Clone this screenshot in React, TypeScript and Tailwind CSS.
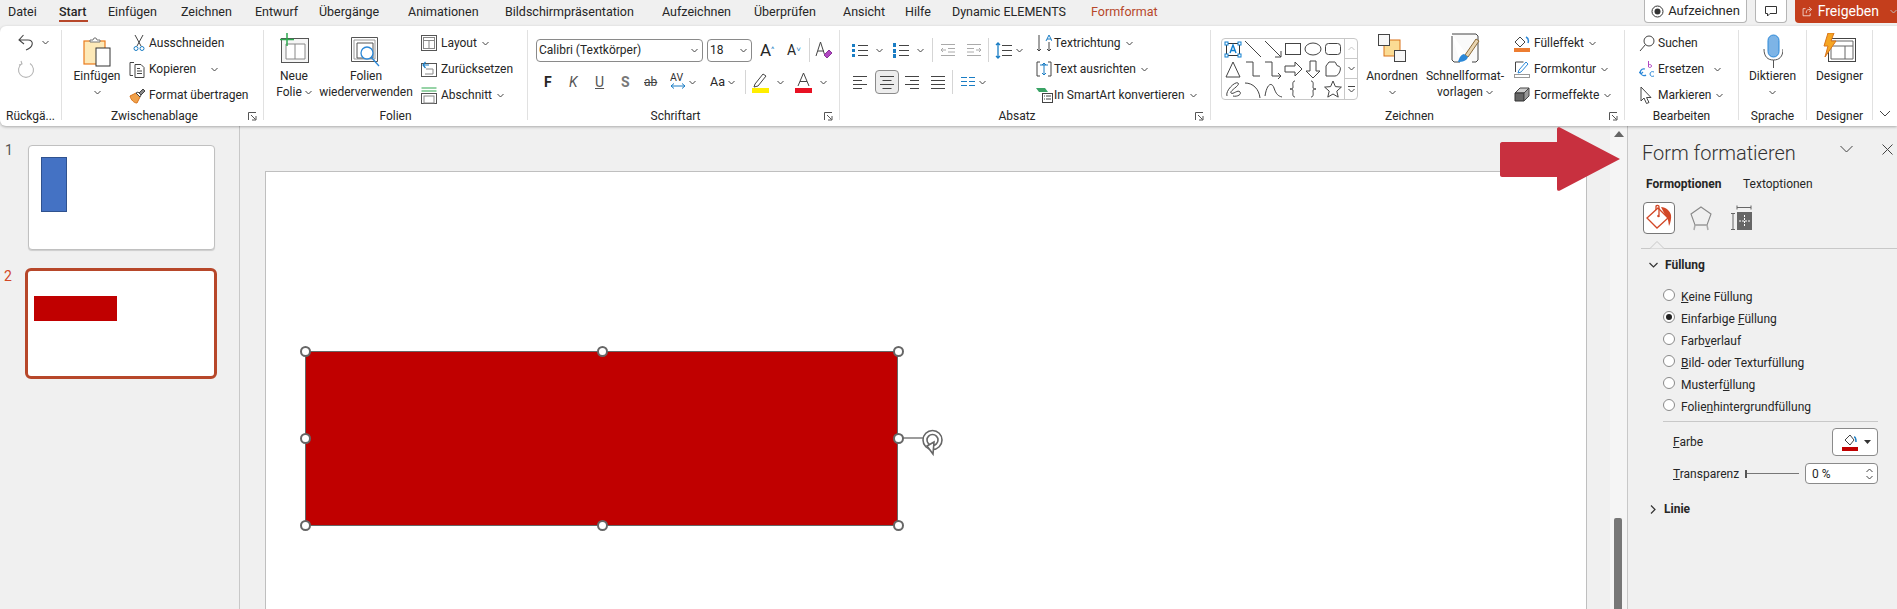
import type { ReactNode } from "react";

const tabs = [
  { label: "Datei", cls: "w-[51px]" },
  { label: "Start", cls: "w-[49px] font-medium" },
  { label: "Einfügen", cls: "w-[73px]" },
  { label: "Zeichnen", cls: "w-[74px]" },
  { label: "Entwurf", cls: "w-[64px]" },
  { label: "Übergänge", cls: "w-[89px]" },
  { label: "Animationen", cls: "w-[97px]" },
  { label: "Bildschirmpräsentation", cls: "w-[157px]" },
  { label: "Aufzeichnen", cls: "w-[92px]" },
  { label: "Überprüfen", cls: "w-[89px]" },
  { label: "Ansicht", cls: "w-[62px]" },
  { label: "Hilfe", cls: "w-[47px]" },
  { label: "Dynamic ELEMENTS", cls: "w-[139px]" },
  { label: "Formformat", cls: "w-[90px] text-[#b7472a]" },
];

function Chev({ className = "" }: { className?: string }) {
  return (
    <svg width="7" height="5" viewBox="0 0 7 5" className={"shrink-0 " + className} fill="none" stroke="#444" strokeWidth="1">
      <path d="M.5 1 3.5 4 6.5 1" />
    </svg>
  );
}

function Launcher() {
  return (
    <svg width="9" height="9" viewBox="0 0 9 9" fill="none" stroke="#555" strokeWidth="1">
      <path d="M.5 8V.5H8M3 3l4.500 4.500M4 8h4V4" />
    </svg>
  );
}

function Group({ cls, label, launcher, children }: { cls: string; label: string; launcher?: boolean; children: ReactNode }) {
  return (
    <div className={"h-[90px] flex flex-col border-r border-[#e1e1e1] shrink-0 " + cls}>
      <div className="h-[80px] flex shrink-0">{children}</div>
      <div className="h-[12px] shrink-0 flex items-center text-[12px] leading-[12px] whitespace-nowrap">
        <div className="flex-1 text-center">{label}</div>
        {launcher && (
          <div className="w-[16px] flex justify-start pl-[1px]">
            <Launcher />
          </div>
        )}
      </div>
    </div>
  );
}

function SmallRow({ icon, text, chev, chevCls = "ml-[5px]", iconCls = "w-[20px]" }: { icon: ReactNode; text: string; chev?: boolean; chevCls?: string; iconCls?: string }) {
  return (
    <div className="h-[26px] flex items-center whitespace-nowrap">
      <div className={"flex items-center justify-start shrink-0 " + iconCls}>{icon}</div>
      <span>{text}</span>
      {chev && <Chev className={chevCls} />}
    </div>
  );
}

function Tall({ cls, icon, lines, chevBelow }: { cls: string; icon: ReactNode; lines: ReactNode[]; chevBelow?: boolean }) {
  return (
    <div className={"flex flex-col items-center shrink-0 " + cls}>
      <div className="h-[38px] flex items-center justify-center">{icon}</div>
      {lines.map((l, i) => (
        <div key={i} className="h-[16px] leading-[16px] whitespace-nowrap flex items-center">
          {l}
        </div>
      ))}
      {chevBelow && (
        <div className="h-[16px] flex items-center">
          <Chev />
        </div>
      )}
    </div>
  );
}

const stroke = { fill: "none", stroke: "#444", strokeWidth: 1 };

const shapes: ReactNode[] = [
  <g key="a">
    <rect x="3.5" y="4.5" width="13" height="12" fill="none" stroke="#333" />
    <rect x="2" y="3" width="3" height="3" fill="#fff" stroke="#0f7fd0" />
    <rect x="15" y="3" width="3" height="3" fill="#fff" stroke="#0f7fd0" />
    <rect x="2" y="15" width="3" height="3" fill="#fff" stroke="#0f7fd0" />
    <rect x="15" y="15" width="3" height="3" fill="#fff" stroke="#0f7fd0" />
    <path d="M7 14l3-8 3 8M8 11.5h4" fill="none" stroke="#0f7fd0" strokeWidth="1.4" />
  </g>,
  <path key="b" d="M2 2l16 16" {...stroke} />,
  <path key="c" d="M2 2l16 16M18 12v6h-6" {...stroke} />,
  <rect key="d" x="2.5" y="4.5" width="15" height="11" {...stroke} />,
  <ellipse key="e" cx="10" cy="10" rx="8" ry="6" {...stroke} />,
  <rect key="f" x="2.5" y="4.5" width="15" height="11" rx="3" {...stroke} />,
  <path key="g" d="M10 3l7 15H3z" {...stroke} />,
  <path key="h" d="M3 3h7v14h7" {...stroke} />,
  <path key="i" d="M2 3h7v14h9M15 14l3 3-3 3" {...stroke} />,
  <path key="j" d="M2 7h10V3l7 7-7 7v-4H2z" {...stroke} />,
  <path key="k" d="M7 2h6v10h4l-7 7-7-7h4z" {...stroke} />,
  <path key="l" d="M3 17V7l3-4h6c1 0 1 4 3 4s3 2 2 5-3 5-5 5z" {...stroke} />,
  <path key="m" d="M4 17C2 12 12 2 15 4S6 12 8 14s7-4 9-1-4 5-7 4" {...stroke} />,
  <path key="n" d="M2 4c8 0 14 6 15 15" {...stroke} />,
  <path key="o" d="M2 17C4 4 9 3 11 9s4 8 8 9" {...stroke} />,
  <path key="p" d="M12 2c-3 0-2 4-2 6s-1 2-3 2c2 0 3 0 3 2s-1 6 2 6" {...stroke} />,
  <path key="q" d="M8 2c3 0 2 4 2 6s1 2 3 2c-2 0-3 0-3 2s1 6-2 6" {...stroke} />,
  <path key="r" d="M10 2l2.4 5.6 6 .5-4.6 4 1.4 6L10 15l-5.2 3.1 1.4-6-4.6-4 6-.5z" {...stroke} />,
];

function ListLines({ x = 6 }: { x?: number }) {
  return (
    <g stroke="#444">
      <path d={`M${x} 3.5h10M${x} 8.5h10M${x} 13.5h10`} />
    </g>
  );
}

function Handle({ cls }: { cls: string }) {
  return <div className={"absolute w-[11px] h-[11px] rounded-full bg-white border-2 border-[#666] " + cls} />;
}

function Radio({ on, children }: { on?: boolean; children: ReactNode }) {
  return (
    <div className="h-[22px] flex items-center pl-[35px]">
      <div className="w-[12px] h-[12px] rounded-full border border-[#8a8a8a] bg-white flex items-center justify-center shrink-0">
        {on && <div className="w-[6px] h-[6px] rounded-full bg-[#222]" />}
      </div>
      <div className="ml-[6px] mt-[3px]">{children}</div>
    </div>
  );
}

export default function App() {
  return (
    <div className="relative h-screen w-full overflow-hidden bg-[#f0f0f0] text-[#262626] text-[12px] font-['Roboto',sans-serif]">
      {/* tab row */}
      <div className="h-[26px] flex items-start justify-between">
        <div className="flex pl-[8px] text-[12.5px]">
          {tabs.map((t) => (
            <div key={t.label} className={"h-[23px] leading-[23px] relative whitespace-nowrap " + t.cls}>
              {t.label}
              {t.label === "Start" && <div className="absolute left-0 top-[20px] w-[29px] h-[2px] bg-[#b7472a]" />}
            </div>
          ))}
        </div>
        <div className="flex gap-[8px] text-[13px]">
          <div className="w-[103px] h-[23px] border border-[#b5b5b5] border-t-0 rounded-b-[4px] bg-white flex items-center justify-center gap-[4px]">
            <svg width="13" height="13" viewBox="0 0 13 13">
              <circle cx="6.5" cy="6.5" r="5.5" fill="none" stroke="#333" />
              <circle cx="6.5" cy="6.5" r="3" fill="#333" />
            </svg>
            Aufzeichnen
          </div>
          <div className="w-[32px] h-[23px] border border-[#b5b5b5] border-t-0 rounded-b-[4px] bg-white flex items-center justify-center">
            <svg width="14" height="13" viewBox="0 0 14 13" fill="none" stroke="#333">
              <path d="M1.5 1.5h11v7H6L3.5 11V8.500H1.500z" />
            </svg>
          </div>
          <div className="w-[102px] h-[23px] rounded-bl-[4px] bg-[#c43e1c] text-white text-[14px] flex items-center pl-[7px] gap-[5px]">
            <svg width="15" height="15" viewBox="0 0 15 15" fill="none" stroke="#fff">
              <path d="M5 3.500H1.500v10h10V10M6 10V8c0-2.500 2.500-3.500 6-3.500M10 1.500l3.500 3-3.500 3" />
            </svg>
            Freigeben
            <Chev className="ml-[6px] invert" />
          </div>
        </div>
      </div>

      {/* ribbon */}
      <div className="relative z-10 h-[100px] bg-white rounded-l-[6px] shadow-[0_1px_3px_rgba(0,0,0,0.3)] pt-[4px] flex">
        <Group cls="w-[62px]" label="Rückgä...">
          <div className="pl-[18px] pt-[4px]">
            <div className="flex items-center h-[17px] gap-[6px]">
              <svg width="18" height="17" viewBox="0 0 18 17" fill="none" stroke="#444" strokeWidth="1.1">
                <path d="M1 6h9c6 0 6 7-2 10M5.500 1 1 6l5 4" />
              </svg>
              <Chev />
            </div>
            <svg className="mt-[9px] ml-[-1px]" width="18" height="18" viewBox="0 0 18 18" fill="none" stroke="#b5b5b5" strokeWidth="1.1">
              <path d="M5 3.500A7.500 7.500 0 1 0 13 3.500M4 1l1 3-3 1" />
            </svg>
          </div>
        </Group>

        <Group cls="w-[202px]" label="Zwischenablage" launcher>
          <Tall
            cls="w-[50px] ml-[10px]"
            icon={
              <svg width="28" height="30" viewBox="0 0 28 30" className="mt-[6px]">
                <rect x="1" y="4" width="21" height="23" fill="#fde9b8" stroke="#e97b1c" strokeWidth="1.200" />
                <path d="M7 5V3h3l1-2h2l1 2h3v2z" fill="#fff" stroke="#777" />
                <rect x="13" y="11" width="14" height="18" fill="#fff" stroke="#333" />
              </svg>
            }
            lines={["Einfügen"]}
            chevBelow
          />
          <div className="ml-[7px] pt-0">
            <SmallRow
              icon={
                <svg width="12" height="17" viewBox="0 0 12 17" fill="none" stroke="#444" className="ml-[4px]">
                  <path d="M2 0l6 11M10 0 4 11" />
                  <circle cx="3" cy="13.500" r="2" stroke="#1a7dc4" />
                  <circle cx="9" cy="13.500" r="2" stroke="#1a7dc4" />
                </svg>
              }
              text="Ausschneiden"
            />
            <div className="flex items-center">
              <SmallRow
                icon={
                  <svg width="17" height="17" viewBox="0 0 17 17" fill="none" stroke="#444">
                    <path d="M5 1.500H1v13h3M6 3.500h6l3 3v10H6zM8 10h5M8 12.500h5M8 7.500h3" />
                  </svg>
                }
                text="Kopieren"
              />
              <Chev className="ml-[15px]" />
            </div>
            <SmallRow
              icon={
                <svg width="17" height="17" viewBox="0 0 17 17">
                  <path d="M1 9l6-3 4 4-3 6C5 16 2 13 1 9z" fill="#f0a14b" stroke="#d9731a" />
                  <path d="M7 6l2-1 3 3-1 2z" fill="#fff" stroke="#444" />
                  <path d="M10 6l4-4 2 2-4 4z" fill="#888" stroke="#444" />
                </svg>
              }
              text="Format übertragen"
            />
          </div>
        </Group>

        <Group cls="w-[264px]" label="Folien">
          <Tall
            cls="w-[60px]"
            icon={
              <svg width="30" height="30" viewBox="0 0 30 30" className="mt-[-2px]">
                <rect x="2.500" y="5.500" width="27" height="24" fill="#f6f6f6" stroke="#555" />
                <path d="M7 11h19v15H7zM16 11v15" fill="#fff" stroke="#888" />
                <path d="M8 0v13M1 6.500h14" stroke="#2ea84f" strokeWidth="1.500" />
              </svg>
            }
            lines={[
              "Neue",
              <span key="f" className="flex items-center gap-[3px]">
                Folie <Chev />
              </span>,
            ]}
          />
          <Tall
            cls="w-[100px] ml-[-8px]"
            icon={
              <svg width="32" height="32" viewBox="0 0 32 32" className="mt-[6px]">
                <path d="M1.500 1.500h26v24h-26z" fill="#fff" stroke="#555" />
                <path d="M4 4h21v19H4z" fill="#fff" stroke="#999" />
                <path d="M7 7h16v15H7z" fill="#fff" stroke="#555" />
                <circle cx="17" cy="17" r="6" fill="#fff" stroke="#2b88d8" strokeWidth="1.300" />
                <path d="M21 21l8 9" stroke="#2b88d8" strokeWidth="1.300" />
              </svg>
            }
            lines={["Folien", "wiederverwenden"]}
          />
          <div className="ml-[5px]">
            <SmallRow
              icon={
                <svg width="16" height="16" viewBox="0 0 16 16" fill="none" stroke="#555">
                  <rect x=".5" y=".5" width="15" height="15" />
                  <rect x="2.500" y="2.500" width="11" height="11" stroke="#888" />
                  <path d="M2.500 5.500h11M8 5.500v8" stroke="#888" />
                </svg>
              }
              text="Layout"
              chev
            />
            <SmallRow
              icon={
                <svg width="16" height="16" viewBox="0 0 16 16" fill="none" stroke="#555">
                  <rect x=".5" y="2.500" width="15" height="13" />
                  <path d="M5 8h7v5H4" stroke="#888" />
                  <path d="M2 4h6M4.500 1 2 4l2.500 3" stroke="#1a7dc4" strokeWidth="1.200" />
                </svg>
              }
              text="Zurücksetzen"
            />
            <SmallRow
              icon={
                <svg width="16" height="17" viewBox="0 0 16 17" fill="none" stroke="#555">
                  <path d="M.5 1h15M.5 4h15" stroke="#2ea84f" strokeWidth="1.200" />
                  <rect x=".5" y="6.500" width="15" height="10" />
                  <rect x="3" y="9" width="10" height="7" stroke="#888" />
                </svg>
              }
              text="Abschnitt"
              chev
            />
          </div>
        </Group>

        <Group cls="w-[312px]" label="Schriftart" launcher>
          <div className="pl-[8px] pt-[8px]">
            <div className="flex items-center h-[24px]">
              <div className="w-[167px] h-[23px] border border-[#8a8a8a] rounded-[4px] flex items-center justify-between pl-[2px] pr-[4px]">
                Calibri (Textkörper) <Chev />
              </div>
              <div className="ml-[4px] w-[45px] h-[23px] border border-[#8a8a8a] rounded-[4px] flex items-center justify-between pl-[2px] pr-[4px]">
                18 <Chev />
              </div>
              <span className="ml-[8px] w-[27px] text-[17px] leading-[20px]">
                A<span className="align-top text-[8px] text-[#1a7dc4]">^</span>
              </span>
              <span className="w-[20px] text-[14px] leading-[20px]">
                A<span className="align-top text-[8px] text-[#1a7dc4]">˅</span>
              </span>
              <div className="ml-[2px] w-px h-[24px] bg-[#d5d5d5]" />
              <svg className="ml-[5px]" width="18" height="20" viewBox="0 0 18 20" fill="none" stroke="#444">
                <path d="M1 16 5.500 2 10 16M3 11h6" />
                <path d="M9 15l5-5 3 3-5 5z" fill="#b146c2" stroke="#8a3599" />
              </svg>
            </div>
            <div className="flex items-center h-[24px] mt-[8px]">
              <span className="ml-[8px] w-[25px] font-bold text-[14px]">F</span>
              <span className="w-[26px] italic text-[14px] text-[#555]">K</span>
              <span className="w-[26px] underline text-[14px] text-[#555]">U</span>
              <span className="w-[23px] font-bold text-[14px] text-[#777]">S</span>
              <span className="w-[26px] line-through text-[12px] text-[#444]">ab</span>
              <svg width="16" height="20" viewBox="0 0 16 20" fill="none">
                <path d="M1 14h14M1 14l3-2.500M1 14l3 2.500M15 14l-3-2.500M15 14l-3 2.500" stroke="#1a7dc4" />
                <text x="0" y="9" fontSize="10.500" fill="#333" stroke="none">
                  AV
                </text>
              </svg>
              <Chev className="ml-[3px]" />
              <span className="ml-[14px] text-[12.500px]">Aa</span>
              <Chev className="ml-[3px]" />
              <div className="ml-[10px] w-px h-[24px] bg-[#d5d5d5]" />
              <svg className="ml-[6px]" width="17" height="22" viewBox="0 0 17 22">
                <path d="M3 13l8-10 3 2-8 10-4 1z" fill="#fff" stroke="#444" />
                <rect x="0" y="17" width="17" height="5" fill="#ffee00" />
              </svg>
              <Chev className="ml-[8px]" />
              <svg className="ml-[11px]" width="17" height="22" viewBox="0 0 17 22" fill="none" stroke="#444">
                <path d="M3 15 8.500 2 14 15M5 10.500h7" />
                <rect x="0" y="17" width="17" height="5" fill="#e81123" stroke="none" />
              </svg>
              <Chev className="ml-[8px]" />
            </div>
          </div>
        </Group>

        <Group cls="w-[371px]" label="Absatz" launcher>
          <div className="pl-[12px] pt-[8px] w-[190px]">
            <div className="flex items-center h-[24px]">
              <svg width="17" height="17" viewBox="0 0 17 17">
                <ListLines />
                <rect x="0" y="2" width="3" height="3" fill="#1a7dc4" />
                <rect x="0" y="7" width="3" height="3" fill="#1a7dc4" />
                <rect x="0" y="12" width="3" height="3" fill="#1a7dc4" />
              </svg>
              <Chev className="ml-[7px]" />
              <svg className="ml-[10px]" width="17" height="17" viewBox="0 0 17 17">
                <ListLines />
                <rect x="0" y="1" width="3" height="4" fill="#1a7dc4" />
                <rect x="0" y="7" width="3" height="4" fill="#1a7dc4" />
                <rect x="0" y="12" width="3" height="4" fill="#1a7dc4" />
              </svg>
              <Chev className="ml-[7px]" />
              <div className="ml-[8px] w-px h-[24px] bg-[#d5d5d5]" />
              <svg className="ml-[7px]" width="16" height="16" viewBox="0 0 16 16" fill="none" stroke="#aaa">
                <path d="M1 2.500h14M8 6.500h7M8 10h7M1 13.500h14M6 8H1M3 6 1 8l2 2" />
              </svg>
              <svg className="ml-[10px]" width="16" height="16" viewBox="0 0 16 16" fill="none" stroke="#aaa">
                <path d="M1 2.500h14M1 6.500h7M1 10h7M1 13.500h14M10 8h5M13 6l2 2-2 2" />
              </svg>
              <div className="ml-[6px] w-px h-[24px] bg-[#d5d5d5]" />
              <svg className="ml-[6px]" width="17" height="17" viewBox="0 0 17 17" fill="none">
                <path d="M7 3.500h10M7 8.500h10M7 13.500h10" stroke="#444" />
                <path d="M3 1v15M1 3l2-2 2 2M1 14l2 2 2-2" stroke="#1a7dc4" strokeWidth="1.300" />
              </svg>
              <Chev className="ml-[4px]" />
            </div>
            <div className="flex items-center h-[24px] mt-[8px]">
              <svg width="16" height="16" viewBox="0 0 16 16" stroke="#444">
                <path d="M1 2.500h14M1 6.500h9M1 10.500h14M1 14.500h9" />
              </svg>
              <div className="ml-[7px] w-[24px] h-[24px] rounded-[4px] border border-[#8a8a8a] bg-[#ededed] flex items-center justify-center">
                <svg width="16" height="16" viewBox="0 0 16 16" stroke="#444">
                  <path d="M1 2.500h14M3.500 6.500h9M1 10.500h14M3.500 14.500h9" />
                </svg>
              </div>
              <svg className="ml-[5px]" width="16" height="16" viewBox="0 0 16 16" stroke="#444">
                <path d="M1 2.500h14M6 6.500h9M1 10.500h14M6 14.500h9" />
              </svg>
              <svg className="ml-[10px]" width="16" height="16" viewBox="0 0 16 16" stroke="#444">
                <path d="M1 2.500h14M1 6.500h14M1 10.500h14M1 14.500h14" />
              </svg>
              <div className="ml-[6px] w-px h-[24px] bg-[#d5d5d5]" />
              <svg className="ml-[8px]" width="14" height="12" viewBox="0 0 14 12" stroke="#1a7dc4">
                <path d="M0 1.500h6M8 1.500h6M0 5.500h6M8 5.500h6M0 9.500h6M8 9.500h6" />
              </svg>
              <Chev className="ml-[4px]" />
            </div>
          </div>
          <div className="ml-[6px]">
            <SmallRow
              iconCls="w-[18px]"
              icon={
                <svg width="16" height="18" viewBox="0 0 16 18" fill="none" stroke="#444">
                  <path d="M3 1v16M1 15l2 2 2-2M13 8v9M11 15l2 2 2-2" />
                  <path d="M10 7l3-6 3 6M11 5h4" stroke="#1a7dc4" />
                </svg>
              }
              text="Textrichtung"
              chev
            />
            <SmallRow
              iconCls="w-[18px]"
              icon={
                <svg width="16" height="16" viewBox="0 0 16 16" fill="none" stroke="#444">
                  <path d="M4 1H1v14h3M12 1h3v14h-3" />
                  <path d="M8 2v12M6 4l2-2 2 2M6 12l2 2 2-2M4 4h8" stroke="#1a7dc4" />
                </svg>
              }
              text="Text ausrichten"
              chev
            />
            <SmallRow
              iconCls="w-[18px]"
              icon={
                <svg width="17" height="16" viewBox="0 0 17 16">
                  <path d="M0 1h9l3 4H3z" fill="#3aa365" />
                  <rect x="6.500" y="6.500" width="10" height="9" fill="#fff" stroke="#444" />
                  <path d="M8 9h1M10 9h5M8 12h1M10 12h5" stroke="#444" />
                </svg>
              }
              text="In SmartArt konvertieren"
              chev
            />
          </div>
        </Group>

        <Group cls="w-[414px]" label="Zeichnen" launcher>
          <div className="ml-[10px] mt-[8px] w-[137px] h-[62px] border border-[#c8c8c8] rounded-[4px] flex shrink-0">
            <div className="w-[122px] pl-[1px] grid grid-cols-[repeat(6,20px)] auto-rows-[20px]">
              {shapes.map((s, i) => (
                <svg key={i} width="20" height="20" viewBox="0 0 20 20">
                  {s}
                </svg>
              ))}
            </div>
            <div className="w-[13px] border-l border-[#c8c8c8] flex flex-col">
              <div className="h-[20px] flex items-center justify-center border-b border-[#c8c8c8]">
                <Chev className="rotate-180 opacity-30" />
              </div>
              <div className="h-[20px] flex items-center justify-center border-b border-[#c8c8c8]">
                <Chev />
              </div>
              <div className="flex-1 flex flex-col gap-[1px] items-center justify-center">
                <div className="w-[7px] h-px bg-[#444]" />
                <Chev />
              </div>
            </div>
          </div>
          <Tall
            cls="w-[64px] ml-[2px]"
            icon={
              <svg width="28" height="28" viewBox="0 0 28 28" className="mt-[-2px]">
                <rect x="6" y="6" width="16" height="16" fill="#fbdc94" stroke="#d9731a" />
                <rect x=".5" y=".5" width="11" height="11" fill="#f7f7f7" stroke="#444" />
                <rect x="16.500" y="16.500" width="11" height="11" fill="#f7f7f7" stroke="#444" />
              </svg>
            }
            lines={["Anordnen"]}
            chevBelow
          />
          <Tall
            cls="w-[84px] ml-[-1px]"
            icon={
              <svg width="30" height="30" viewBox="0 0 30 30" className="mt-[-2px]">
                <path d="M2 1h24l2 2v24l-2 2h-4M10 29H4l-2-2V3" fill="#fafafa" stroke="#444" />
                <path d="M15 22l11-16 3 2-11 16z" fill="#e8d4b0" stroke="#8a6a3a" />
                <path d="M14 21c-4 1-5 5-6 8 4 0 9-1 10-5z" fill="#2b88d8" />
              </svg>
            }
            lines={[
              "Schnellformat-",
              <span key="v" className="flex items-center gap-[3px]">
                vorlagen <Chev />
              </span>,
            ]}
          />
          <div className="ml-[7px]">
            <SmallRow
              icon={
                <svg width="16" height="17" viewBox="0 0 16 17" fill="none" stroke="#444">
                  <path d="M1 7l5-5 5 5-5 5z" />
                  <path d="M12 2c2 1 3 3 2 6" stroke="#2b88d8" strokeWidth="1.500" />
                  <rect x="0" y="13" width="16" height="4" fill="#ed7d31" stroke="none" />
                </svg>
              }
              text="Fülleffekt"
              chev
            />
            <SmallRow
              icon={
                <svg width="16" height="17" viewBox="0 0 16 17" fill="none" stroke="#444">
                  <path d="M1.500 11V1h8" />
                  <path d="M5 9l7-8 2 2-7 8-3 1z" fill="#fff" stroke="#2b88d8" />
                  <rect x=".5" y="13.500" width="15" height="3" stroke="#999" />
                </svg>
              }
              text="Formkontur"
              chev
            />
            <SmallRow
              icon={
                <svg width="16" height="16" viewBox="0 0 16 16">
                  <path d="M1 6l5-5h9L10 6z" fill="#ccc" stroke="#444" />
                  <path d="M1 6h9v8H1z" fill="#666" stroke="#333" />
                  <path d="M10 6l5-5v8l-5 5z" fill="#999" stroke="#444" />
                </svg>
              }
              text="Formeffekte"
              chev
            />
          </div>
        </Group>

        <Group cls="w-[114px]" label="Bearbeiten">
          <div className="ml-[14px]">
            <SmallRow
              iconCls="w-[19px]"
              icon={
                <svg width="16" height="17" viewBox="0 0 16 17" fill="none" stroke="#444">
                  <circle cx="10" cy="6" r="5" />
                  <path d="M6.500 9.500 1 16" />
                </svg>
              }
              text="Suchen"
            />
            <div className="flex items-center">
              <SmallRow
                iconCls="w-[19px]"
                icon={
                  <svg width="16" height="18" viewBox="0 0 16 18" fill="none">
                    <path d="M9.500 1v6M9.500 5c1-1 3-.5 3 1s-2 2-3 1" stroke="#b146c2" />
                    <path d="M6 9C2 8 .5 12 2 14s4 2 5 1M0 12l2 2 2-2" stroke="#2b88d8" strokeWidth="1.200" />
                    <path d="M15 12c-2-1-4 0-4 2s2 3 4 2" stroke="#2b88d8" />
                  </svg>
                }
                text="Ersetzen"
              />
              <Chev className="ml-[10px]" />
            </div>
            <SmallRow
              iconCls="w-[19px]"
              icon={
                <svg width="14" height="19" viewBox="0 0 14 19" fill="#fff" stroke="#444">
                  <path d="M2 1v14l3-3 2.500 5.500 2.500-1L7.500 11.500H12z" />
                </svg>
              }
              text="Markieren"
              chev
            />
          </div>
        </Group>

        <Group cls="w-[68px]" label="Sprache">
          <Tall
            cls="w-[67px]"
            icon={
              <svg width="20" height="36" viewBox="0 0 20 36" className="mt-[6px]">
                <rect x="5" y="1" width="11" height="22" rx="5.500" fill="#7db4e6" stroke="#2b88d8" />
                <path d="M1 15c0 8 4 11 9.500 11S20 23 20 15M10.500 26v8" fill="none" stroke="#555" />
              </svg>
            }
            lines={["Diktieren"]}
            chevBelow
          />
        </Group>

        <Group cls="w-[66px]" label="Designer">
          <Tall
            cls="w-[65px]"
            icon={
              <svg width="34" height="30" viewBox="0 0 34 30" className="mt-[-2px]">
                <rect x="5.500" y="5.500" width="27" height="23" fill="#fff" stroke="#444" />
                <path d="M8 8h22v18H8zM8 13h22M22 13v13" fill="none" stroke="#666" />
                <path d="M11 0H5L1 13h4L2 24 13 8H8z" fill="#f5a623" stroke="#d9731a" />
              </svg>
            }
            lines={["Designer"]}
          />
        </Group>

        <div className="flex-1 flex justify-center items-end pb-[8px]">
          <svg width="12" height="8" viewBox="0 0 12 8" fill="none" stroke="#444">
            <path d="M1 1l5 5 5-5" />
          </svg>
        </div>
      </div>

      {/* main */}
      <div className="flex h-[483px]">
        <div className="w-[240px] shrink-0 border-r border-[#c8c8c8] pt-[19px]">
          <div className="flex pl-[5px]">
            <div className="w-[23px] -mt-[3px] text-[14px] leading-[16px] text-[#555]">1</div>
            <div className="w-[187px] h-[105px] bg-white border border-[#c0c0c0] rounded-[4px] shadow-[0_1px_1px_rgba(0,0,0,0.15)] pl-[12px] pt-[11px]">
              <div className="w-[26px] h-[55px] bg-[#4472c4] border border-[#2f528f]" />
            </div>
          </div>
          <div className="flex pl-[4px] mt-[18px]">
            <div className="w-[21px] -mt-[3px] text-[14px] leading-[22px] text-[#d24726]">2</div>
            <div className="w-[192px] h-[111px] bg-white border-[3px] border-[#b7472a] rounded-[6px] pl-[6px] pt-[25px]">
              <div className="w-[83px] h-[25px] bg-[#c00000]" />
            </div>
          </div>
        </div>

        <div className="flex-1 min-w-0 pl-[25px] pt-[45px] overflow-hidden">
          <div className="relative w-[1322px] h-[600px] bg-white border border-[#bfbfbf]">
            <div className="absolute left-[39px] top-[179px] w-[593px] h-[175px] bg-[#c00000] border border-[#666]" />
            <Handle cls="left-[34px] top-[174px]" />
            <Handle cls="left-[331px] top-[174px]" />
            <Handle cls="left-[627px] top-[174px]" />
            <Handle cls="left-[34px] top-[261px]" />
            <Handle cls="left-[627px] top-[261px]" />
            <Handle cls="left-[34px] top-[348px]" />
            <Handle cls="left-[331px] top-[348px]" />
            <Handle cls="left-[627px] top-[348px]" />
            <svg className="absolute left-[637px] top-[255px]" width="42" height="30" viewBox="0 0 42 30" fill="none" stroke="#666">
              <path d="M0 11h20" strokeWidth="1.300" />
              <circle cx="29.500" cy="13" r="9.500" strokeWidth="1.600" />
              <circle cx="29.500" cy="13" r="5.500" strokeWidth="1.600" />
              <path d="M24 19l7-4-1 12z" fill="#fff" strokeWidth="1.600" />
            </svg>
          </div>
        </div>

        <div className="w-[18px] shrink-0 bg-[#f5f5f5] border-r border-[#c8c8c8] flex flex-col items-center pt-[5px]">
          <svg width="10" height="6" viewBox="0 0 10 6">
            <path d="M5 0l5 6H0z" fill="#666" />
          </svg>
          <div className="mt-auto w-[8px] h-[91px] bg-[#777] rounded-t-[2px] mr-[1px]" />
        </div>

        <div className="w-[269px] shrink-0 pt-[12px]">
          <div className="h-[30px] flex items-center pl-[14px]">
            <span className="text-[20px] leading-[30px] text-[#333] font-light">Form formatieren</span>
            <svg className="ml-auto mb-[8px]" width="13" height="8" viewBox="0 0 13 8" fill="none" stroke="#444">
              <path d="M.5 1l6 6 6-6" />
            </svg>
            <svg className="ml-[29px] mr-[4px] mb-[8px]" width="11" height="11" viewBox="0 0 11 11" fill="none" stroke="#444">
              <path d="M.5.5l10 10M10.500.5l-10 10" />
            </svg>
          </div>
          <div className="flex pl-[18px] mt-[7px] h-[18px] leading-[18px]">
            <span className="w-[97px] font-bold">Formoptionen</span>
            <span>Textoptionen</span>
          </div>
          <div className="flex items-center pl-[15px] mt-[9px]">
            <div className="w-[32px] h-[32px] rounded-[4px] border border-[#777] bg-white flex items-center justify-center">
              <svg width="30" height="30" viewBox="0 0 30 30" fill="none" stroke="#d24726" strokeWidth="1.300">
                <path d="M3 15 14 5l10 10-11 10z" />
                <path d="M12 7V3.500c0-1.500 3-1.500 3 0V12" />
                <circle cx="14.500" cy="13" r="1.300" fill="#d24726" stroke="none" />
                <path d="M17 4c5 0 9 4 10 8 .5 3-.5 8-2 11-.5-4-1-9-4-11z" fill="#d24726" stroke="none" />
              </svg>
            </div>
            <svg className="ml-[14px]" width="24" height="26" viewBox="0 0 24 26" fill="none" stroke="#888" strokeWidth="1.100">
              <path d="M12 2l10 7-4 11H6L2 9z" />
              <path d="M6 20h12M6 20l-1 5M18 20l1 5" stroke="#aaa" strokeWidth="1.500" />
            </svg>
            <svg className="ml-[17px]" width="24" height="26" viewBox="0 0 24 26" fill="none" stroke="#666">
              <path d="M7 .5v4M21 .5v4M7 2.500h14M1 8.500h4M1 24.500h4M3 8.500v16" />
              <rect x="7" y="7" width="15" height="18" fill="#666" stroke="none" />
              <path d="M14.500 10v12M9 16h11" stroke="#fff" strokeDasharray="2 1" />
            </svg>
          </div>
          <div className="relative ml-[13px] mt-[14px] h-px bg-[#c8c8c8]">
            <svg className="absolute left-[9px] top-[-7px]" width="14" height="8" viewBox="0 0 14 8" fill="#f0f0f0" stroke="#c8c8c8">
              <path d="M0 7.500 7 .5 14 7.500" />
            </svg>
          </div>
          <div className="mt-[8px] h-[16px] flex items-center pl-[21px] font-bold">
            <svg width="9" height="6" viewBox="0 0 9 6" fill="none" stroke="#333" strokeWidth="1.200">
              <path d="M.5 1l4 4 4-4" />
            </svg>
            <span className="ml-[7px]">Füllung</span>
          </div>
          <div className="mt-[11px]">
            <Radio>
              <u>K</u>eine Füllung
            </Radio>
            <Radio on>
              Einfarbige <u>F</u>üllung
            </Radio>
            <Radio>
              Farb<u>v</u>erlauf
            </Radio>
            <Radio>
              <u>B</u>ild- oder Texturfüllung
            </Radio>
            <Radio>
              Musterf<u>ü</u>llung
            </Radio>
            <Radio>
              Folie<u>n</u>hintergrundfüllung
            </Radio>
          </div>
          <div className="ml-[35px] mt-[5px] w-[215px] h-px bg-[#c8c8c8]" />
          <div className="mt-[6px] ml-[45px] w-[205px] flex items-center justify-between">
            <span>
              <u>F</u>arbe
            </span>
            <div className="w-[46px] h-[28px] rounded-[4px] border border-[#8a8a8a] bg-white flex items-center pl-[9px] gap-[6px]">
              <svg width="16" height="18" viewBox="0 0 16 18" fill="none" stroke="#444">
                <path d="M3 7l5-5 4 5-4 5z" />
                <path d="M12 4c2 0 2 3 2 5" stroke="#1a7dc4" strokeWidth="1.500" />
                <rect x="0" y="14" width="16" height="4" fill="#c00000" stroke="none" />
              </svg>
              <svg width="7" height="4" viewBox="0 0 7 4">
                <path d="M0 0h7L3.500 4z" fill="#333" />
              </svg>
            </div>
          </div>
          <div className="mt-[7px] ml-[45px] w-[205px] flex items-center">
            <span className="w-[72px]">
              <u>T</u>ransparenz
            </span>
            <div className="w-[54px] h-[8px] flex items-center">
              <div className="w-[2px] h-[8px] bg-[#555]" />
              <div className="flex-1 h-px bg-[#777]" />
            </div>
            <div className="ml-[6px] w-[73px] h-[21px] rounded-[4px] border border-[#8a8a8a] bg-white flex items-center justify-between pl-[6px] pr-[4px]">
              0 %
              <div className="flex flex-col gap-[2px]">
                <Chev className="rotate-180" />
                <Chev />
              </div>
            </div>
          </div>
          <div className="mt-[17px] h-[16px] flex items-center pl-[22px] font-bold">
            <svg width="6" height="9" viewBox="0 0 6 9" fill="none" stroke="#333" strokeWidth="1.200">
              <path d="M1 .5l4 4-4 4" />
            </svg>
            <span className="ml-[8px]">Linie</span>
          </div>
        </div>
      </div>

      {/* red callout arrow */}
      <svg className="absolute left-[1500px] top-[127px] z-20" width="121" height="65" viewBox="0 0 121 65">
        <path d="M2 15h55V2c0-2 2-2 3-1.500L120 32 60 63.500c-1 .5-3 .5-3-1.500V50H2c-1 0-2-1-2-2V17c0-1 1-2 2-2z" fill="#c8303f" />
      </svg>
    </div>
  );
}
